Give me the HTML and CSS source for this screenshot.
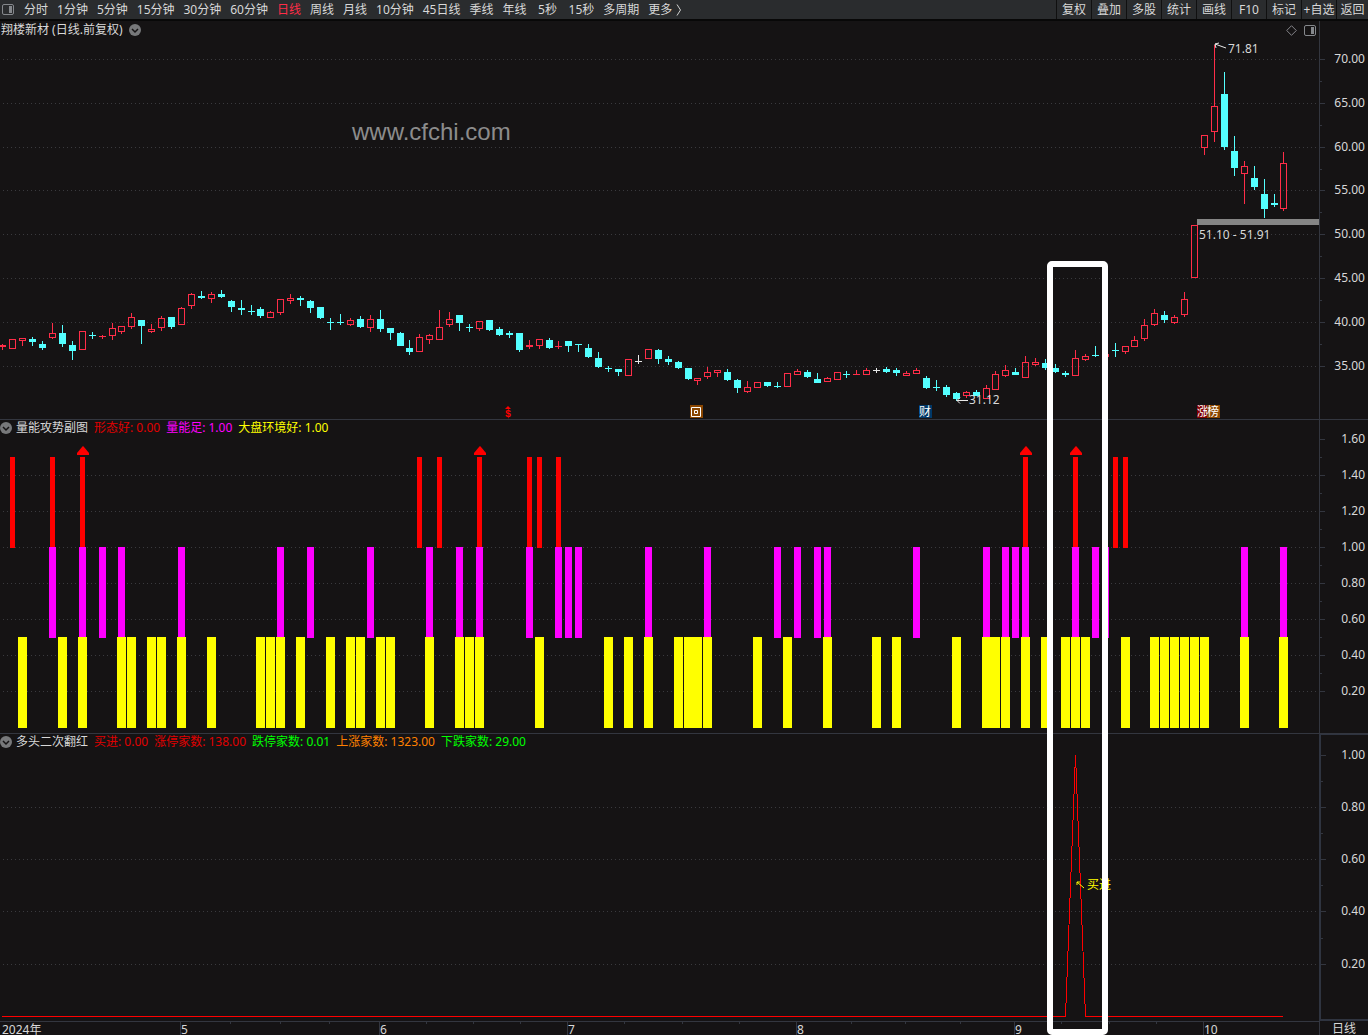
FILE: index.html
```html
<!DOCTYPE html>
<html lang="zh-CN">
<head>
  <meta charset="UTF-8">
  <title>翔楼新材 日线</title>
  <link rel="stylesheet" href="styles.css">
</head>
<body>
  <header class="toolbar">
    <button class="layout-btn" aria-label="布局">
      <svg width="12" height="11" viewBox="0 0 12 11"><rect x=".5" y=".5" width="11" height="10" rx="1.5" fill="none" stroke="#85888c"/><rect x="7" y="2" width="3" height="7" fill="#85888c"/></svg>
    </button>
    <nav class="periods">
      <button>分时</button>
      <button>1分钟</button>
      <button>5分钟</button>
      <button>15分钟</button>
      <button>30分钟</button>
      <button>60分钟</button>
      <button class="active">日线</button>
      <button>周线</button>
      <button>月线</button>
      <button>10分钟</button>
      <button>45日线</button>
      <button>季线</button>
      <button>年线</button>
      <button>5秒</button>
      <button>15秒</button>
      <button>多周期</button>
      <button class="more">更多
        <svg width="6" height="12" viewBox="0 0 6 12"><path d="M1 .5L4.500 6L1 11.500" fill="none" stroke="#d0d0d0"/></svg>
      </button>
    </nav>
    <div class="tools">
      <button>复权</button>
      <button>叠加</button>
      <button>多股</button>
      <button>统计</button>
      <button>画线</button>
      <button>F10</button>
      <button>标记</button>
      <button>+自选</button>
      <button>返回</button>
    </div>
  </header>

  <main class="workspace" id="workspace">
    <section class="panel">
      <svg class="plot" id="pricePlot"></svg>
      <div class="title price-title">
        <span>翔楼新材 (日线.前复权)</span>
        <button class="drop" aria-label="展开"><svg width="12" height="12" viewBox="0 0 12 12"><circle cx="6" cy="6" r="6" fill="#77787a"/><path d="M3 5L6 8L9 5" fill="none" stroke="#151314" stroke-width="1.5"/></svg></button>
        <div class="title-icons">
          <svg width="11" height="11" viewBox="0 0 11 11"><path d="M5.500 .7L10.300 5.500L5.500 10.300L.7 5.500Z" fill="none" stroke="#85858a"/></svg>
          <svg width="12" height="11" viewBox="0 0 12 11"><rect x=".5" y=".5" width="11" height="10" rx="1.500" fill="none" stroke="#85888c"/><rect x="7" y="2" width="3" height="7" fill="#85888c"/></svg>
        </div>
      </div>
    </section>
    <svg class="axis" id="priceAxis"></svg>

    <section class="panel">
      <svg class="plot" id="volumePlot"></svg>
      <div class="title">
        <button class="drop" aria-label="展开"><svg width="12" height="12" viewBox="0 0 12 12"><circle cx="6" cy="6" r="6" fill="#77787a"/><path d="M3 5L6 8L9 5" fill="none" stroke="#151314" stroke-width="1.5"/></svg></button>
        <span>量能攻势副图</span>
        <span class="red">形态好: 0.00</span>
        <span class="magenta">量能足: 1.00</span>
        <span class="yellow">大盘环境好: 1.00</span>
      </div>
    </section>
    <svg class="axis" id="volumeAxis"></svg>

    <section class="panel last">
      <svg class="plot" id="signalPlot"></svg>
      <div class="title">
        <button class="drop" aria-label="展开"><svg width="12" height="12" viewBox="0 0 12 12"><circle cx="6" cy="6" r="6" fill="#77787a"/><path d="M3 5L6 8L9 5" fill="none" stroke="#151314" stroke-width="1.5"/></svg></button>
        <span>多头二次翻红</span>
        <span class="red">买进: 0.00</span>
        <span class="red">涨停家数: 138.00</span>
        <span class="green">跌停家数: 0.01</span>
        <span class="orange">上涨家数: 1323.00</span>
        <span class="green">下跌家数: 29.00</span>
      </div>
    </section>
    <svg class="axis selected" id="signalAxis"></svg>

    <svg class="months" id="months"></svg>
    <div class="period-name">日线</div>

    <div class="highlight" id="highlight"></div>
  </main>

  <script src="charts.js"></script>
</body>
</html>
```
FILE: styles.css
```css
* {
  box-sizing: border-box;
}
body {
  margin: 0;
  height: 100vh;
  display: flex;
  flex-direction: column;
  overflow: hidden;
  background: #151314;
  color: #d8d8d8;
  font-family: "Noto Sans", "Noto Sans CJK SC", sans-serif;
  font-size: 12px;
  line-height: 16px;
}
button {
  padding: 0;
  border: 0;
  background: none;
  color: inherit;
  font: inherit;
  white-space: nowrap;
}
svg {
  display: block;
}

/* toolbar */
.toolbar {
  display: flex;
  flex: none;
  height: 21px;
  background: #2a2c2e;
  border-bottom: 2px solid #080808;
}
.layout-btn {
  margin: 0 10px 0 2px;
}
.periods {
  display: flex;
  gap: 9px;
}
.periods button {
  min-width: 24px;
}
.periods .active {
  color: #ff2d48;
}
.more {
  display: flex;
  align-items: center;
  gap: 4px;
}
.tools {
  display: flex;
  margin-left: auto;
}
.tools button {
  width: 35px;
  border-left: 1px solid #101010;
  display: flex;
  justify-content: center;
  align-items: center;
}
.tools button:last-child {
  width: 32px;
}

/* charts */
.workspace {
  position: relative;
  flex: 1;
  min-height: 0;
  display: grid;
  grid-template-columns: minmax(0, 1fr) 49px;
  grid-template-rows: minmax(0, 399fr) minmax(0, 314fr) minmax(0, 287fr) 14px;
}
.panel {
  display: grid;
  grid-template: minmax(0, 1fr) / minmax(0, 1fr);
  border-bottom: 1px solid #33363f;
}
.panel.last {
  border-bottom: 0;
}
.plot, .title {
  grid-area: 1 / 1;
}
.plot, .axis, .months {
  width: 100%;
  height: 100%;
}
.title {
  display: flex;
  align-items: center;
  align-self: start;
  gap: 6px;
  height: 16px;
  white-space: nowrap;
}
.title .drop {
  margin-right: -2px;
}
.price-title {
  height: 18px;
  padding-left: 1px;
}
.title-icons {
  display: flex;
  gap: 7px;
  margin-left: auto;
  padding-right: 3px;
}
.axis {
  border-left: 1px solid #33363f;
  border-bottom: 1px solid #33363f;
}
.axis.selected {
  border: solid #2f3440;
  border-width: 1px 0 2px 2px;
}
.months {
  border-top: 1px solid #33363f;
  overflow: visible;
}
.period-name {
  border-left: 1px solid #33363f;
  padding-left: 12px;
}
.highlight {
  position: absolute;
  bottom: 0;
  border: 6px solid #fff;
  border-radius: 5px;
}

.red { color: #e00000; }
.magenta { color: #ff00ff; }
.yellow { color: #ffff00; }
.green { color: #00ff00; }
.orange { color: #ff8000; }

/* drawings */
.grid {
  stroke: #3a3a3e;
  stroke-dasharray: 1 3;
}
.tick {
  fill: #33363f;
}
.label {
  fill: #d8d8d8;
}
.end {
  text-anchor: end;
}
.arrow {
  fill: none;
  stroke: #e8e8e8;
}
.buy {
  fill: #ffff00;
}
.buy-arrow {
  fill: none;
  stroke: #ffff00;
}
.signal {
  fill: none;
  stroke: #ff0000;
}
.watermark {
  fill: #8c8c8c;
  font: 24px "Liberation Sans", sans-serif;
}
.badge {
  fill: #fff;
  font-size: 12px;
  text-anchor: middle;
}
.dollar {
  fill: #ff0000;
  font: bold 10px "Liberation Mono", monospace;
  text-anchor: middle;
}
```
FILE: charts.js
```javascript
// r = up, c = down, w = flat; then high, body top, body bottom, low
const candles = `
r344,345,347,350 r339,339,349,349 r338,338,341,346 c337,339,342,346 c341,344,348,350
r323,333,338,339 c325,333,344,347 c341,345,351,360 r331,331,350,350 c332,335,336,339
r335,336,337,339 r323,328,336,340 r326,326,332,334 r313,317,327,329 c320,320,326,344
r324,329,332,333 r316,318,328,331 c317,317,327,329 r307,308,325,325 r293,294,306,309
c291,296,298,299 r292,294,299,303 c290,294,297,298 c300,301,307,312 c300,308,310,315
c305,311,312,315 c307,309,316,318 r311,312,318,318 r299,299,313,315 r294,298,301,304
c296,298,300,306 c300,301,308,313 c307,307,318,319 c318,322,323,330 c314,322,323,325
r318,320,325,326 c316,319,327,328 r315,319,328,332 c310,319,329,332 c328,328,333,340
c332,333,346,346 c340,348,352,355 r334,337,352,352 r334,335,340,344 r310,327,340,340
r312,319,325,327 c315,315,323,331 c324,327,328,332 r321,321,329,331 c320,320,330,331
c327,329,335,336 c331,333,335,338 c333,333,350,352 r340,345,347,349 r339,339,346,349
c338,340,348,349 r341,346,347,349 c341,341,346,352 c344,344,345,352 c344,348,357,358
c352,358,367,368 c366,368,369,372 c369,369,372,376 r359,359,376,376 w355,361,362,364
r349,349,359,359 c349,350,359,364 c356,359,362,365 c361,362,368,369 c368,368,379,380
r378,378,381,385 r367,372,377,379 r370,370,373,377 c369,372,380,381 c379,380,388,393
r381,387,392,393 r382,382,388,388 c382,382,386,387 c382,386,387,388 r373,373,387,387
r369,371,375,375 c370,372,377,378 c373,379,383,383 r377,378,382,382 r372,372,380,380
c371,374,375,378 r370,374,375,375 r368,370,375,375 w368,370,371,373 c367,369,372,373
c368,370,373,376 r371,373,376,376 r368,370,374,374 c376,378,388,389 c380,387,388,391
c385,387,395,397 c392,393,399,401 r391,392,396,398 c390,392,396,396 r385,388,399,399
r371,374,390,390 r365,370,376,377 c368,372,375,375 r356,362,378,378 r358,362,365,366
c359,363,368,370 c364,368,372,373 c371,373,375,377 r350,358,376,376 r354,356,360,361
c346,355,356,357 r354,354,357,357 c343,350,351,357 r346,346,352,354 r336,340,347,347
r319,325,339,341 r309,313,325,326 c311,315,320,323 r315,317,323,324 r292,299,315,317
r225,225,278,278 r135,135,148,155 r45,106,132,142 c72,94,147,150 c136,151,168,176
r161,166,174,204 c166,178,187,190 c179,194,209,218 c194,203,205,207 r152,163,209,211
`.trim().split(/\s+/).map(s => [s[0], ...s.slice(1).split(",").map(Number)]);

const shape = [1, 5, 8, 42, 44, 48, 53, 54, 56, 103, 108, 112, 113];
const volume = [5, 8, 10, 12, 18, 28, 31, 37, 43, 46, 48, 53, 56, 57, 58, 65, 71, 78, 80, 82, 83,
  92, 99, 101, 102, 103, 108, 110, 111, 125, 129];
const market = [2, 6, 8, 12, 13, 15, 16, 18, 21, 26, 27, 28, 30, 33, 35, 36, 38, 39, 43, 46, 47, 48,
  54, 61, 63, 65, 68, 69, 70, 71, 76, 79, 83, 88, 90, 96, 99, 100, 101, 103, 105, 107, 108, 109,
  113, 116, 117, 118, 119, 120, 121, 125, 129];
const triangles = [8, 48, 103, 108];

const colors = { r: "#ff2d48", c: "#54ffff", w: "#e8e8e8" };
const baseWidth = 1319;
const $ = id => document.getElementById(id);

let sx, sy;
let top0 = 0;
const x = v => Math.round(v * sx);
const y = v => Math.round((v - top0) * sy);
const cx = i => x(Math.round(2.25 + i * 9.932));

function rect(left, top, width, height, fill) {
  return `<rect x="${left}" y="${top}" width="${width}" height="${height}" fill="${fill}"/>`;
}

function text(left, top, str, cls) {
  return `<text class="${cls}" x="${left}" y="${top}">${str}</text>`;
}

function gridLines(rows) {
  return rows.map(v => `<path class="grid" d="M3 ${y(v) + 0.5}H${x(baseWidth)}"/>`).join("");
}

// ticks and numbers at the right of a panel
function drawAxis(id, rows, labels, inset) {
  let out = "";
  rows.forEach((v, i) => {
    out += `<rect class="tick" x="0" y="${y(v) - inset}" width="5" height="1"/>`;
    const next = rows[i + 1];
    if (next) out += `<rect class="tick" x="0" y="${y((v + next) / 2) - inset}" width="2" height="1"/>`;
    out += text($(id).clientWidth - 3, y(v) + 4 - inset, labels[i], "label end");
  });
  $(id).innerHTML = out;
}

function drawPrice() {
  const rows = [59, 103, 147, 190, 234, 278, 322, 366];
  let out = gridLines(rows);
  candles.forEach(([kind, high, top, bottom, low], i) => {
    const c = cx(i), color = colors[kind];
    const h = y(bottom) - y(top);
    if (kind === "r" && h > 2) {
      out += rect(c, y(high), 1, y(top) - y(high), color);
      out += rect(c, y(bottom), 1, y(low) - y(bottom), color);
      out += `<rect x="${c - 2.5}" y="${y(top) + 0.5}" width="6" height="${h - 1}" fill="none" stroke="${color}"/>`;
    } else {
      out += rect(c, y(high), 1, y(low) - y(high), color);
      out += rect(c - 3, y(top), 7, Math.max(h, 1), color);
    }
  });

  out += rect(x(1197), y(219), x(baseWidth) - x(1197), 6, "#858585");
  out += text(x(1199), y(239), "51.10 - 51.91", "label");
  out += text(x(1228), y(53), "71.81", "label");
  out += `<path class="arrow" d="M${x(1215)} ${y(44)}l11 4m-11 -4l4 -1m-4 1l1 4"/>`;
  out += text(x(969), y(404), "31.12", "label");
  out += `<path class="arrow" d="M${x(957)} ${y(400) + 0.5}h11m-11 0l3 -3m-3 3l3 3"/>`;
  out += text(x(352), y(140), "www.cfchi.com", "watermark");

  // event badges
  out += text(x(508), y(417), "$", "dollar");
  out += `<path d="M${x(505)} ${y(409)}l3 -3l3 3z" fill="#ff0000"/>`;
  out += rect(x(690), y(405), 13, 13, "#8a4600");
  out += `<path d="M${x(691) + 0.5} ${y(407) + 0.5}h9v9h-9zm3 3h3v3h-3z" fill="none" stroke="#fff"/>`;
  [[919, 13, "财", "#003868"], [1197, 10, "涨", "#800000"], [1207, 13, "榜", "#8a4600"]].forEach(b => {
    out += rect(x(b[0]), y(405), b[1], 13, b[3]);
    out += text(x(b[0]) + 6, y(416), b[2], "badge");
  });
  $("pricePlot").innerHTML = out;
  drawAxis("priceAxis", rows, ["70.00", "65.00", "60.00", "55.00", "50.00", "45.00", "40.00", "35.00"], 0);
}

function drawVolume() {
  const rows = [439, 475, 511, 547, 583, 619, 655, 691];
  let out = gridLines(rows.slice(1));
  shape.forEach(i => out += rect(cx(i) - 2, y(457), 5, y(548) - y(457), "#ff0000"));
  volume.forEach(i => out += rect(cx(i) - 3, y(547), 7, y(638) - y(547), "#ff00ff"));
  market.forEach(i => out += rect(cx(i) - 4, y(637), 9, y(728) - y(637), "#ffff00"));
  triangles.forEach(i => {
    out += `<path d="M${cx(i) - 5} ${y(455)}v-2l5 -6l1 -1l1 1l5 6v2z" fill="#ff0000"/>`;
  });
  $("volumePlot").innerHTML = out;
  drawAxis("volumeAxis", rows, ["1.60", "1.40", "1.20", "1.00", "0.80", "0.60", "0.40", "0.20"], 0);
}

function drawSignal() {
  const rows = [755, 807, 859, 911, 964];
  let out = gridLines(rows.slice(1));
  const base = y(1016) + 0.5;
  out += `<path class="signal" shape-rendering="crispEdges" d="M${cx(0)} ${base}H${cx(107) + 0.5}L${cx(108) + 0.5} ${y(755)}L${cx(109) + 0.5} ${base}H${cx(129)}"/>`;
  out += `<path class="buy-arrow" d="M${x(1077)} ${y(882)}l7 6m-7 -6h3m-3 0v3"/>`;
  out += text(x(1087), y(889), "买进", "buy");
  $("signalPlot").innerHTML = out;
  drawAxis("signalAxis", rows, ["1.00", "0.80", "0.60", "0.40", "0.20"], 1);
}

function drawMonths() {
  const months = [[0, "2024年"], [180, "5"], [379, "6"], [567, "7"], [796, "8"], [1014, "9"], [1203, "10"]];
  let out = "";
  months.forEach(([start, name], i) => {
    if (i) out += `<rect class="tick" x="${x(start)}" y="0" width="1" height="13"/>`;
    out += text(x(start) + (i ? 1 : 2), 12, name, "label");
    if (i && i + 1 < months.length) {
      const step = (months[i + 1][0] - start) / 4;
      for (let k = 1; k < 4; k++) out += `<rect class="tick" x="${x(start + step * k)}" y="0" width="1" height="2"/>`;
    }
  });
  $("months").innerHTML = out;
}

function drawPanel(id, top, height, draw) {
  const box = $(id).getBoundingClientRect();
  top0 = top;
  sx = box.width / baseWidth;
  sy = box.height / height;
  draw();
}

function drawAll() {
  drawPanel("pricePlot", 21, 398, drawPrice);
  drawPanel("volumePlot", 420, 313, drawVolume);
  drawPanel("signalPlot", 734, 287, drawSignal);
  drawMonths();

  const mark = $("highlight");
  mark.style.left = x(1047) + "px";
  mark.style.width = x(1108) - x(1047) + "px";
  mark.style.top = 240 * $("workspace").clientHeight / 1014 + "px";
}

window.addEventListener("resize", drawAll);
drawAll();
```
